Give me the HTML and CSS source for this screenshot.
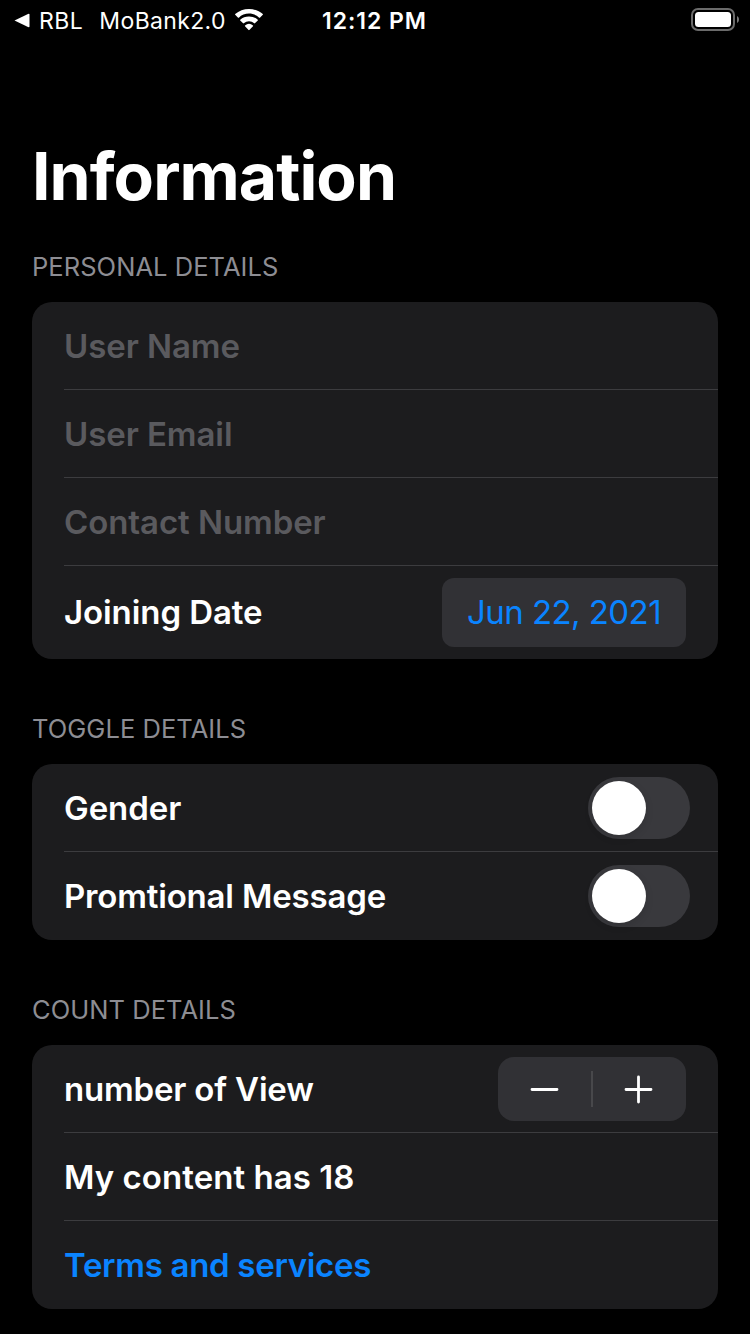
FILE: index.html
```html
<!DOCTYPE html>
<html lang="en">
<head>
<meta charset="utf-8">
<title>Information</title>
<link rel="stylesheet" href="styles.css">
</head>
<body>
<header class="status">
  <div class="status-left">
    <svg class="back" width="16" height="16" viewBox="0 0 16 16"><path d="M.5 8.500L14 2Q15.500 1.500 15.500 2.500V14.500Q15.500 15.500 14 15Z" fill="#fff"/></svg>
    <span class="app app-source">RBL</span><span class="app app-name">MoBank2.0</span>
    <svg class="wifi" width="30" height="22" viewBox="0 0 30 22" fill="#fff"><path d="M15 4.600c3.900 0 7.500 1.500 10.200 4.100.2.200.5.200.7 0l2.900-2.900c.2-.2.2-.5 0-.7C25.100 1.900 20.200 0 15 0S4.900 1.900 1.200 5.100c-.2.200-.2.500 0 .7l2.900 2.900c.2.200.5.200.7 0C7.500 6.100 11.100 4.600 15 4.600z"/><path d="M15 12.300c2 0 3.800.7 5.200 2 .2.200.5.200.7 0l2.900-2.900c.2-.2.2-.5 0-.7A13 13 0 0 0 15 7.400a13 13 0 0 0-8.800 3.300c-.2.200-.2.500 0 .7l2.900 2.900c.2.200.5.200.7 0a7.800 7.800 0 0 1 5.200-2z"/><path d="M19 17.200c.2-.2.2-.5 0-.7a6.300 6.300 0 0 0-8 0c-.2.200-.2.500 0 .7l3.600 3.900c.2.200.5.200.7 0z"/></svg>
  </div>
  <span class="clock">12:12 PM</span>
  <svg class="battery" width="50" height="26" viewBox="0 0 50 26"><rect x="2" y="2" width="42" height="21" rx="6" fill="none" stroke="#6b6b6b" stroke-width="2"/><rect x="5" y="5" width="36" height="15" rx="3.500" fill="#fff"/><path d="M47 9c1.500.7 2 2 2 3.500s-.5 2.800-2 3.500z" fill="#777"/></svg>
</header>
<main class="page">
  <h1 class="title">Information</h1>
  <h2 class="heading first">PERSONAL DETAILS</h2>
  <section class="card">
    <div class="row"><span class="label placeholder">User Name</span></div>
    <div class="row"><span class="label placeholder">User Email</span></div>
    <div class="row"><span class="label placeholder">Contact Number</span></div>
    <div class="row date-row"><span class="label">Joining Date</span><span class="date">Jun 22, 2021</span></div>
  </section>
  <h2 class="heading">TOGGLE DETAILS</h2>
  <section class="card">
    <div class="row"><span class="label">Gender</span><span class="switch"></span></div>
    <div class="row"><span class="label snug">Promtional Message</span><span class="switch"></span></div>
  </section>
  <h2 class="heading">COUNT DETAILS</h2>
  <section class="card">
    <div class="row"><span class="label snug">number of View</span><svg class="stepper" width="188" height="64" viewBox="0 0 188 64"><rect width="188" height="64" rx="16" fill="#313135"/><path d="M94 14V50" stroke="#48484b" stroke-width="2"/><path d="M34 32.500H59M128 32.500H153M140.500 20V45" stroke="#fff" stroke-width="2.800" stroke-linecap="round"/></svg></div>
    <div class="row"><span class="label loose">My content has 18</span></div>
    <div class="row"><span class="label link">Terms and services</span></div>
  </section>
</main>
</body>
</html>
```
FILE: styles.css
```css
* { box-sizing: border-box; }
body { margin: 0; height: 1334px; overflow: hidden; background: #000; color: #fff; font-family: Inter, "Liberation Sans", sans-serif; }
.status { height: 40px; display: grid; grid-template-columns: 322px 1fr 60px; align-items: center; font-size: 23px; }
.status-left { display: flex; align-items: center; padding-left: 14px; }
.app { padding-top: 2px; white-space: pre; }
.app-source { margin-left: 9px; letter-spacing: 0.5px; }
.app-name { margin-left: 16px; letter-spacing: 0.35px; }
.wifi { margin-left: 8px; }
.clock { padding-top: 2px; font-weight: 600; letter-spacing: 0.95px; }
.title { margin: 95px 0 0 32px; height: 82px; line-height: 82px; font-size: 66px; font-weight: 700; letter-spacing: -0.95px; }
.heading { margin: 52px 0 17px 32px; height: 36px; line-height: 36px; font-size: 25.500px; font-weight: 400; letter-spacing: 0.05px; color: #8d8d93; }
.first { margin-top: 32px; }
.card { margin: 0 32px; background: #1c1c1e; border-radius: 20px; }
.row { height: 88px; margin-left: 32px; padding-right: 32px; display: flex; align-items: center; justify-content: space-between; border-bottom: 1px solid #3c3c3f; }
.row:last-child { border-bottom: 0; }
.date-row { height: 93px; }
.date-row .label { margin-top: -2px; }
.label { font-size: 33px; font-weight: 600; letter-spacing: -0.08px; white-space: nowrap; }
.snug { letter-spacing: -0.18px; }
.loose { letter-spacing: 0.05px; }
.placeholder { color: #5a5a5e; }
.link { color: #0a84ff; letter-spacing: -0.3px; }
.date { width: 244px; height: 69px; line-height: 69px; border-radius: 12px; background: #313135; color: #0a84ff; font-size: 33px; letter-spacing: -0.55px; text-align: center; }
.switch { width: 102px; height: 62px; margin-right: -4px; padding: 4px; border-radius: 31px; background: #39393d; }
.switch::before { content: ""; display: block; width: 54px; height: 54px; border-radius: 50%; background: #fff; box-shadow: 0 3px 8px rgba(0, 0, 0, 0.12); }
```
